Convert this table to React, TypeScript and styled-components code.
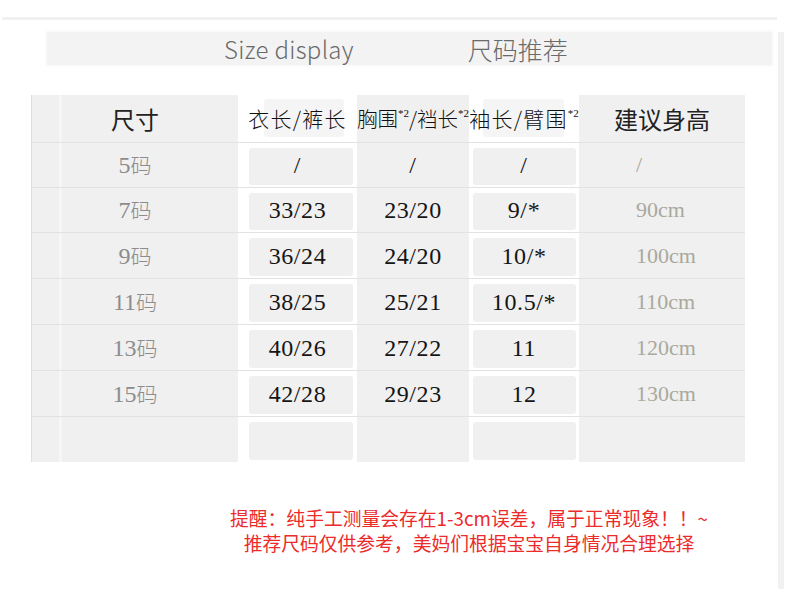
import React from "react";
import styled, { createGlobalStyle } from "styled-components";

const GlobalStyle = createGlobalStyle`
  html, body { margin: 0; padding: 0; background: #ffffff; }
  body { font-family: "Noto Sans CJK SC", "Noto Sans", sans-serif; }
`;

const SANS = `"Noto Sans CJK SC", "Noto Sans", sans-serif`;
const NUM = `"Liberation Serif", "Noto Sans CJK SC", serif`;

const Page = styled.div`
  width: 800px;
  height: 589px;
  display: flex;
  overflow: hidden;
`;

const Main = styled.div`
  width: 778px;
  display: flex;
  flex-direction: column;
`;

const SideStrip = styled.div`
  width: 6px;
  margin-top: 32px;
  background: #f1f1f1;
`;

const TopRule = styled.div`
  margin: 17px 0 0 2px;
  width: 775px;
  height: 3px;
  background: #f1f1f1;
`;

const TitleBand = styled.div`
  margin: 12px 0 0 47px;
  width: 725px;
  height: 33px;
  box-sizing: border-box;
  padding-left: 177px;
  display: flex;
  align-items: center;
  gap: 114px;
  background: #f3f3f3;
  box-shadow: 0 0 3px 1px #f6f6f6;
  color: #6a6a6a;
  font-family: ${SANS};
`;

const TitleEn = styled.span`
  font-size: 24px;
  font-weight: 300;
  letter-spacing: 0.3px;
`;

const TitleCn = styled.span`
  font-size: 25px;
  font-weight: 300;
`;

const Table = styled.div`
  margin: 30px 0 0 31px;
  width: 714px;
  display: grid;
  grid-template-columns: 206px 119px 112px 110px 1fr;
  grid-template-rows: 47px 45px 45px repeat(5, 46px);
  background: #f0f0f0;
  border-left: 1px solid #dedede;
  box-sizing: border-box;
`;

type CellProps = {
  $kind: "size" | "boxed" | "plain" | "height";
  $head?: boolean;
};

const Cell = styled.div<CellProps>`
  position: relative;
  display: flex;
  align-items: center;
  justify-content: ${(p) => (p.$kind === "height" && !p.$head ? "flex-start" : "center")};
  padding-left: ${(p) => (p.$kind === "height" && !p.$head ? "57px" : "0")};
  box-sizing: border-box;
  border-top: ${(p) => (p.$head ? "none" : "1px solid #e2e2e2")};
  background: ${(p) =>
    p.$kind === "boxed"
      ? "#ffffff"
      : p.$kind === "size"
      ? "linear-gradient(to right, transparent 27px, #f6f6f6 27px, #f6f6f6 30px, transparent 30px)"
      : "transparent"};
  white-space: nowrap;
  min-width: 0;
`;

const InnerBox = styled.div<{ $inset: string; $faint?: boolean }>`
  position: absolute;
  inset: ${(p) => p.$inset};
  background: ${(p) => (p.$faint ? "#f5f5f5" : "#f0f0f0")};
  border-radius: 3px;
`;

type Tone = "head" | "song" | "size" | "num" | "height";

const CellText = styled.span<{ $tone: Tone; $tight?: boolean }>`
  position: relative;
  z-index: 2;
  font-family: ${(p) => (p.$tone === "head" || p.$tone === "song" ? SANS : NUM)};
  font-weight: ${(p) => (p.$tone === "song" ? 300 : 400)};
  font-size: ${(p) =>
    p.$tone === "head"
      ? "24px"
      : p.$tone === "song"
      ? p.$tight
        ? "20.5px"
        : "21px"
      : p.$tone === "height"
      ? "22px"
      : "24px"};
  color: ${(p) =>
    p.$tone === "head"
      ? "#222222"
      : p.$tone === "song"
      ? "#111111"
      : p.$tone === "size"
      ? "#8c8c8c"
      : p.$tone === "height"
      ? "#a9a99d"
      : "#151515"};
  letter-spacing: ${(p) =>
    p.$tone === "song" ? (p.$tight ? "0" : "1.2px") : p.$tone === "num" ? "0.6px" : "0"};
  line-height: 1;
`;

const Ma = styled.span`
  font-family: ${SANS};
  font-weight: 300;
  font-size: 21px;
`;

const Sup = styled.span`
  display: inline-block;
  font-family: ${NUM};
  font-size: 11px;
  letter-spacing: 0;
  line-height: 1;
  transform: translateY(-10px);
`;

const Notes = styled.div`
  margin-top: 43px;
  padding-left: 160px;
  text-align: center;
  font-family: ${SANS};
  font-size: 18.8px;
  line-height: 25px;
  color: #ec2b2b;
`;

const rows = [
  { size: "5", a: "/", b: "/", c: "/", h: "/" },
  { size: "7", a: "33/23", b: "23/20", c: "9/*", h: "90cm" },
  { size: "9", a: "36/24", b: "24/20", c: "10/*", h: "100cm" },
  { size: "11", a: "38/25", b: "25/21", c: "10.5/*", h: "110cm" },
  { size: "13", a: "40/26", b: "27/22", c: "11", h: "120cm" },
  { size: "15", a: "42/28", b: "29/23", c: "12", h: "130cm" },
  { size: "", a: "", b: "", c: "", h: "" },
];

export default function App() {
  return (
    <>
      <GlobalStyle />
      <Page>
        <Main>
          <TopRule />
          <TitleBand>
            <TitleEn>Size display</TitleEn>
            <TitleCn>尺码推荐</TitleCn>
          </TitleBand>
          <Table>
            <Cell $kind="size" $head>
              <CellText $tone="head">尺寸</CellText>
            </Cell>
            <Cell $kind="boxed" $head>
              <InnerBox $faint $inset="4px 13px 5px 26px" />
              <CellText $tone="song">衣长/裤长</CellText>
            </Cell>
            <Cell $kind="plain" $head>
              <CellText $tone="song" $tight>
                胸围<Sup>*2</Sup>/裆长<Sup>*2</Sup>
              </CellText>
            </Cell>
            <Cell $kind="boxed" $head>
              <InnerBox $faint $inset="4px 15px 5px 14px" />
              <CellText $tone="song">
                袖长/臂围<Sup>*2</Sup>
              </CellText>
            </Cell>
            <Cell $kind="height" $head>
              <CellText $tone="head">建议身高</CellText>
            </Cell>
            {rows.map((r, i) => (
              <React.Fragment key={i}>
                <Cell $kind="size">
                  {r.size && (
                    <CellText $tone="size">
                      {r.size}
                      <Ma>码</Ma>
                    </CellText>
                  )}
                </Cell>
                <Cell $kind="boxed">
                  <InnerBox $inset="5px 4px 2px 11px" />
                  <CellText $tone="num">{r.a}</CellText>
                </Cell>
                <Cell $kind="plain">
                  <CellText $tone="num">{r.b}</CellText>
                </Cell>
                <Cell $kind="boxed">
                  <InnerBox $inset="5px 3px 2px 4px" />
                  <CellText $tone="num">{r.c}</CellText>
                </Cell>
                <Cell $kind="height">
                  <CellText $tone="height">{r.h}</CellText>
                </Cell>
              </React.Fragment>
            ))}
          </Table>
          <Notes>
            提醒：纯手工测量会存在1-3cm误差，属于正常现象！！~
            <br />
            推荐尺码仅供参考，美妈们根据宝宝自身情况合理选择
          </Notes>
        </Main>
        <SideStrip />
      </Page>
    </>
  );
}
